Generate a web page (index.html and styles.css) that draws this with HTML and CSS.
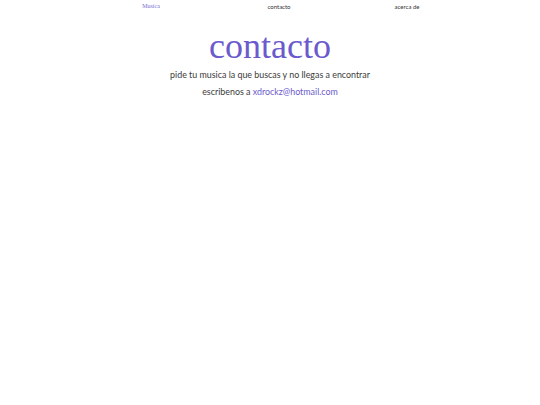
FILE: index.html
```html
<!DOCTYPE html>
<html lang="es">
<head>
<meta charset="utf-8">
<title>contacto</title>
<link rel="stylesheet" href="styles.css">
</head>
<body>
<nav class="nav">
  <a class="nav-link nav-active" href="#">Musica</a>
  <a class="nav-link" href="#">contacto</a>
  <a class="nav-link" href="#">acerca de</a>
</nav>
<main class="content">
  <h1 class="title">contacto</h1>
  <p class="text">pide tu musica la que buscas y no llegas a encontrar</p>
  <p class="text">escribenos a <a class="mail" href="#">xdrockz@hotmail.com</a></p>
</main>
</body>
</html>
```
FILE: styles.css
```css
html, body { margin: 0; padding: 0; background: #fff; }
body { font-family: Lato, sans-serif; color: #3a3a3a; }
.nav {
  display: grid;
  grid-template-columns: repeat(3, 128px);
  margin-left: 87px;
  padding-top: 2px;
}
.nav-link {
  text-align: center;
  font-size: 6px;
  line-height: 9px;
  color: #333;
  text-decoration: none;
}
.nav-active { color: #7b6fd4; font-family: "Liberation Serif", serif; }
.content { text-align: center; }
.title {
  font-family: "Liberation Serif", serif;
  font-weight: normal;
  font-size: 36px;
  line-height: 40px;
  color: #6a5acd;
  margin: 15px 0 0;
}
.text { font-size: 8.9px; line-height: 17px; margin: 0; }
.mail { color: #6a5acd; text-decoration: none; }
```
